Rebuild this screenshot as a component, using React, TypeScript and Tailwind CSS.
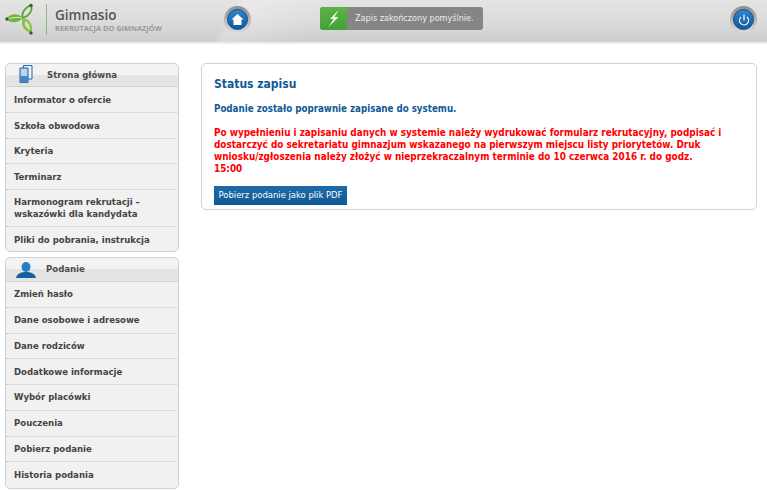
import React from 'react';
import { Power } from 'lucide-react';

const menuOne = [
  { label: 'Informator o ofercie', h: 'h-[26px]' },
  { label: 'Szkoła obwodowa', h: 'h-[26px]' },
  { label: 'Kryteria', h: 'h-[25px]' },
  { label: 'Terminarz', h: 'h-[26px]' },
  { label: 'Harmonogram rekrutacji – wskazówki dla kandydata', h: 'h-[37px]' },
  { label: 'Pliki do pobrania, instrukcja', h: 'h-[24px] pt-[1px]' },
];

const menuTwo = ['Zmień hasło', 'Dane osobowe i adresowe', 'Dane rodziców', 'Dodatkowe informacje', 'Wybór placówki', 'Pouczenia', 'Pobierz podanie', 'Historia podania'];

const Logo = () => (
  <svg width="30" height="32" viewBox="0 0 30 32" className="shrink-0">
    <path d="M1 16 C6 10 13 10 18 15 C13 20 6 21 1 16Z" fill="#6fb544" />
    <path d="M3 16 C8 14 13 14 18 15" stroke="#d6ecc4" strokeWidth="1" fill="none" />
    <path d="M26 2 C19 5 16 11 18 15 C24 13 28 8 26 2Z" fill="none" stroke="#5aa53a" strokeWidth="1.8" />
    <path d="M26 30 C29 23 25 16 18 15 C15 22 19 28 26 30Z" fill="#86c440" />
    <path d="M25 27 C25 22 23 19 20 18 C19 22 21 25 25 27Z" fill="#dcdcdc" />
    <circle cx="26" cy="2.5" r="1.7" fill="#2f5f2a" />
    <circle cx="26" cy="30" r="1.7" fill="#2f5f2a" />
    <circle cx="2" cy="16" r="1.7" fill="#2f5f2a" />
  </svg>
);

const RoundButton = ({ children }: { children: React.ReactNode }) => (
  <div className="w-[27px] h-[27px] rounded-full bg-gradient-to-b from-[#8d8d8d] to-[#dcdcdc] flex items-center justify-center">
    <div className="w-[21px] h-[21px] rounded-full bg-gradient-to-b from-[#2f86cc] to-[#0d5a9c] border border-[#0b4f8a] flex items-center justify-center">
      {children}
    </div>
  </div>
);

const PanelHead = ({ title, icon, pad, h }: { title: string; icon: React.ReactNode; pad: string; h: string }) => (
  <div className={`relative bg-gradient-to-b from-[#f3f3f3] from-50% to-[#e4e4e4] to-50% border-b border-[#d2d2d2] rounded-t-[5px] ${h} flex items-center ${pad}`}>
    <div className="absolute left-[9px] top-0">{icon}</div>
    <span className="text-[9.5px] font-bold text-[#4a4a4a]">{title}</span>
  </div>
);

export default function App() {
  return (
    <div className="w-[767px] h-[491px] overflow-hidden bg-white font-['DejaVu_Sans_Condensed','DejaVu_Sans','Liberation_Sans',sans-serif]">
      <header className="h-[44px] relative bg-[linear-gradient(120deg,transparent_30%,rgba(255,255,255,0.25)_31%,transparent_42%),linear-gradient(180deg,#e4e4e4_0%,#dcdcdc_50%,#cdcdcd_100%)] border-b-[2px] border-b-[#ececec] flex items-center">
        <div className="flex items-center pl-[5px] w-[224px]">
          <div className="-mt-[4px]">
            <Logo />
          </div>
          <div className="w-px h-[31px] bg-[#8db986] ml-[11px] mr-[8px] -mt-[4px]" />
          <div className="-mt-[2px]">
            <div className="text-[13.5px] leading-[15px] font-['Open_Sans',sans-serif] font-semibold text-[#555555]">Gimnasio</div>
            <div className="text-[7.4px] leading-[10px] font-['Open_Sans',sans-serif] font-bold text-[#999999] whitespace-nowrap">REKRUTACJA DO GIMNAZJÓW</div>
          </div>
        </div>
        <div className="w-[96px] -mt-[3px]">
          <RoundButton>
            <svg width="13" height="13" viewBox="0 0 13 13"><path d="M6.5 1 L12.5 6.5 H10.5 V12 H2.5 V6.5 H0.5Z" fill="#ffffff" /></svg>
          </RoundButton>
        </div>
        <div className="flex h-[23px] w-[163px] rounded-[3px] overflow-hidden bg-[#858585] -mt-[5px]">
          <div className="w-[27px] shrink-0 bg-gradient-to-b from-[#5cb346] to-[#45a038] flex items-center justify-center">
            <svg width="13" height="17" viewBox="0 0 13 17"><path d="M11.5 0 L3 9 H6.5 L1.5 17 L11.5 7 H7.5Z" fill="#eef6e8" /></svg>
          </div>
          <span className="pl-[8px] text-[9px] leading-[23px] text-[#ececec] whitespace-nowrap">Zapis zakończony pomyślnie.</span>
        </div>
        <div className="ml-auto mr-[10px] -mt-[3px]">
          <RoundButton>
            <Power size={12} className="text-white" strokeWidth={2.5} />
          </RoundButton>
        </div>
      </header>

      <div className="flex items-start pl-[5px] pt-[19px]">
        <aside className="w-[174px] shrink-0 flex flex-col gap-[5px]">
          <section className="border border-[#d2d2d2] rounded-[5px] bg-[#f1f1f1]">
            <PanelHead
              title="Strona główna"
              pad="pl-[41px]"
              h="h-[23px]"
              icon={
                <svg width="14" height="18" viewBox="0 0 14 18" className="mt-[1px] ml-[4px]">
                  <path d="M4.5 0.5 H13 V14 H4.5Z" fill="#eef3f8" stroke="#1f6aa8" />
                  <path d="M1 3 H9 V17.5 H1Z" fill="#bcd5ea" stroke="#1a5f9c" />
                  <path d="M1 11 H9 V17.5 H1Z" fill="#3f8ac6" />
                </svg>
              }
            />
            {menuOne.map((m, i) => (
              <div key={m.label} className={`${m.h} px-[8px] flex items-center text-[9.5px] leading-[12px] font-bold text-[#444444] ${i < menuOne.length - 1 ? 'border-b border-dotted border-[#c8c8c8]' : ''}`}>
                <span>{m.label}</span>
              </div>
            ))}
          </section>
          <section className="border border-[#d2d2d2] rounded-[5px] bg-[#f1f1f1]">
            <PanelHead
              title="Podanie"
              pad="pl-[40px]"
              h="h-[24px]"
              icon={
                <svg width="20" height="16" viewBox="0 0 20 16" className="mt-[4px] ml-[1px]">
                  <ellipse cx="10" cy="5" rx="4.5" ry="5" fill="#2a7dbd" />
                  <path d="M0 16 C1 11 6 10 10 10 C14 10 19 11 20 16Z" fill="#17609f" />
                </svg>
              }
            />
            {menuTwo.map((m, i) => (
              <div key={m} className={`h-[25.75px] px-[8px] flex items-center text-[9.5px] font-bold text-[#444444] ${i < menuTwo.length - 1 ? 'border-b border-dotted border-[#c8c8c8]' : ''}`}>
                {m}
              </div>
            ))}
          </section>
        </aside>

        <main className="ml-[22px] w-[556px] h-[147px] border border-[#d2d2d2] rounded-[5px] px-[12px] pt-[12px] bg-white">
          <h1 className="text-[12px] leading-[16px] font-bold text-[#0f5a96]">Status zapisu</h1>
          <p className="mt-[11px] text-[9.7px] leading-[12px] font-bold text-[#0f5a96]">Podanie zostało poprawnie zapisane do systemu.</p>
          <p className="mt-[12px] w-[520px] text-[9.9px] leading-[12px] font-bold text-[#ff0000]">
            Po wypełnieniu i zapisaniu danych w systemie należy wydrukować formularz rekrutacyjny, podpisać i dostarczyć do sekretariatu gimnazjum wskazanego na pierwszym miejscu listy priorytetów. Druk wniosku/zgłoszenia należy złożyć w nieprzekraczalnym terminie do 10 czerwca 2016 r. do godz.<br />15:00
          </p>
          <button className="mt-[11px] block h-[19px] w-[133px] bg-gradient-to-b from-[#1c6ba8] to-[#0f5a96] text-white text-[9.4px] whitespace-nowrap">Pobierz podanie jako plik PDF</button>
        </main>
      </div>
    </div>
  );
}
